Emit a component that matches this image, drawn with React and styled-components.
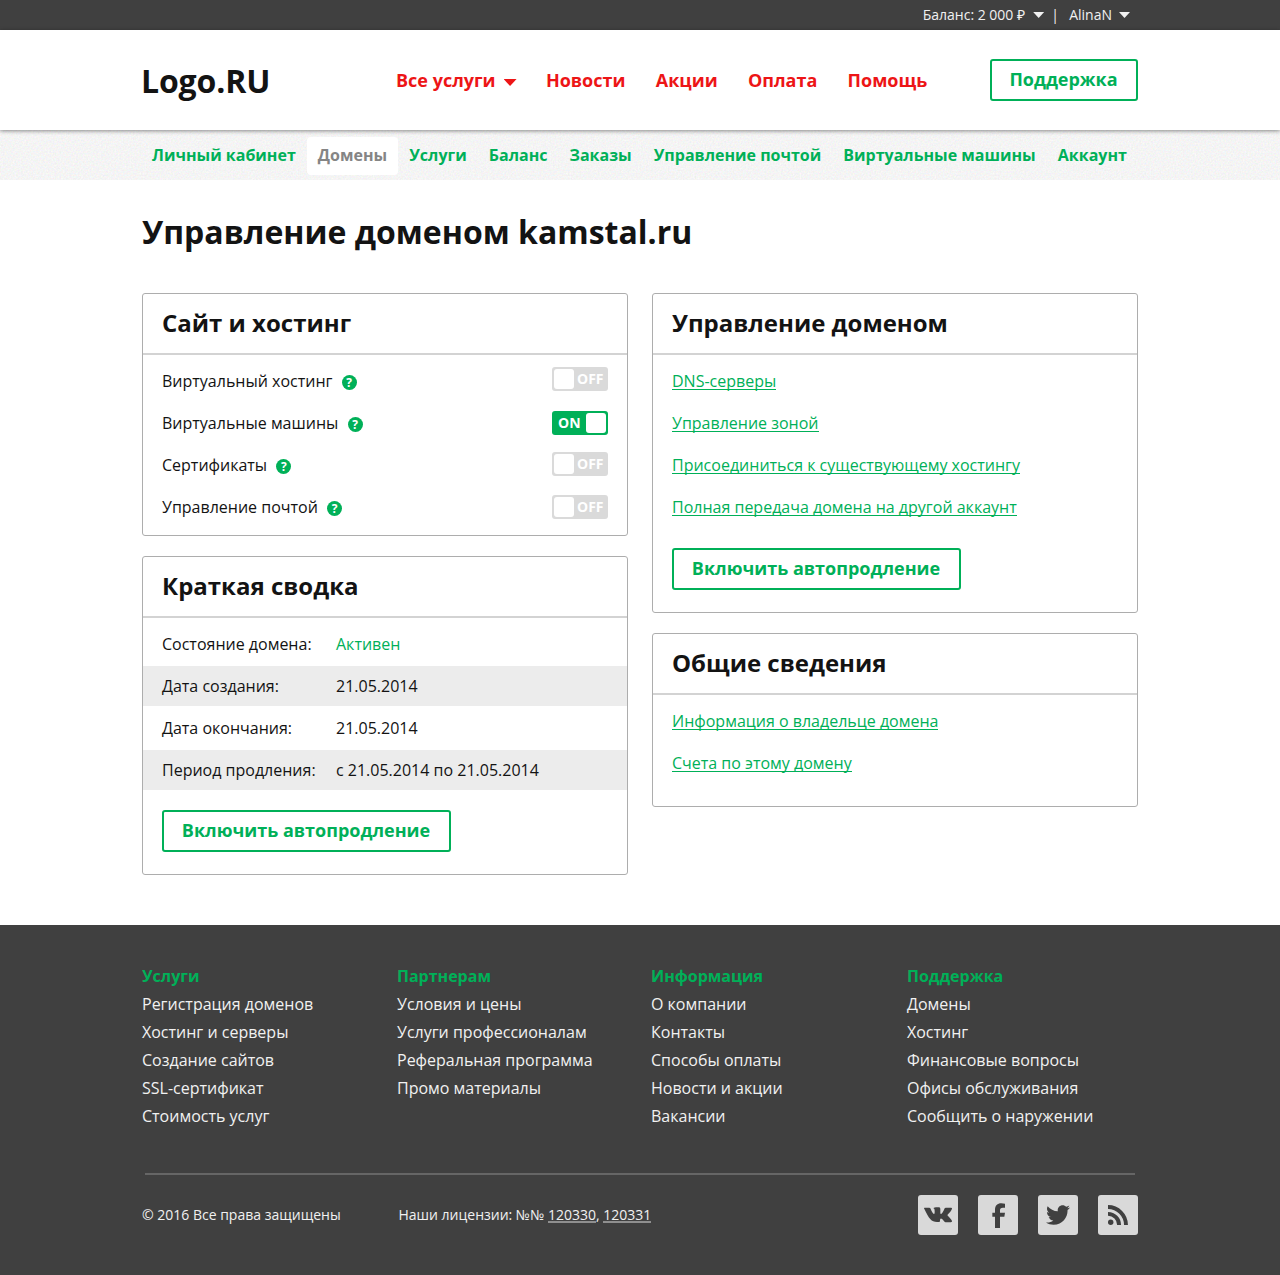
import React, { useState } from "react";
import styled, { createGlobalStyle } from "styled-components";
import { FaTwitter } from "react-icons/fa";

const green = "#00b058";
const red = "#ed1516";
const ink = "#131313";
const dark = "#404040";

const GlobalStyle = createGlobalStyle`
  * { box-sizing: border-box; }
  body {
    margin: 0;
    background: #fff;
    color: ${ink};
    font: 16px/1 "Open Sans", "Noto Sans", sans-serif;
  }
  a { color: inherit; text-decoration: none; }
`;

const Container = styled.div`
  width: 996px;
  margin: 0 auto;
  position: relative;
`;

const TopBar = styled.div`
  height: 30px;
  background: ${dark};
  color: #f1f1f1;
`;

const Account = styled(Container)`
  display: flex;
  justify-content: flex-end;
  align-items: center;
  height: 30px;
  padding-right: 8px;
  font-size: 14px;
  line-height: 30px;
`;

const Caret = styled.span`
  flex: none;
  width: ${(p) => p.$width}px;
  height: ${(p) => Math.ceil(p.$width / 2)}px;
  margin-top: ${(p) => p.$drop || 0}px;
  margin-left: ${(p) => p.$gap}px;
  margin-right: ${(p) => p.$pull || 0}px;
  background: currentColor;
  clip-path: polygon(0 0, 100% 0, 50% 100%);
`;

const Separator = styled.span`
  width: 25px;
  padding-left: 7px;
`;

const Header = styled.header`
  position: relative;
  z-index: 1;
  height: 100px;
  background: #fff;
  box-shadow: 0 1px 4px rgba(0, 0, 0, 0.45);
`;

const HeaderRow = styled(Container)`
  display: flex;
  align-items: center;
  height: 100px;
`;

const Logo = styled.a`
  width: 254px;
  padding-top: 2px;
  margin-left: -1px;
  margin-right: 1px;
  font-size: 32px;
  font-weight: 700;
  line-height: 42px;
  letter-spacing: -0.15px;
`;

const MainNav = styled.nav`
  display: flex;
  gap: 30.3px;
  flex: 1;
  color: ${red};
  font-size: 18px;
  font-weight: 700;
  line-height: 40px;
`;

const MainLink = styled.a`
  display: flex;
  align-items: center;
`;

const Button = styled.button`
  display: block;
  width: ${(p) => p.$width}px;
  height: 42px;
  padding: 0 1px 2px 0;
  border: 2px solid ${green};
  border-radius: 3px;
  background: #fff;
  color: ${green};
  font: 700 18px/36px "Open Sans", "Noto Sans", sans-serif;
  white-space: nowrap;
  cursor: pointer;
`;

const SubBar = styled.div`
  position: relative;
  height: 50px;
  background: #f4f4f4;
`;

const Grain = styled.svg`
  position: absolute;
  inset: 0;
  width: 100%;
  height: 100%;
`;

const Tabs = styled(Container)`
  display: flex;
  padding-top: 7px;
  white-space: nowrap;
`;

const Tab = styled.a`
  height: 38px;
  padding: 0 11.05px;
  border-radius: 4px;
  background: ${(p) => (p.$active ? "#fff" : "transparent")};
  color: ${(p) => (p.$active ? "#858585" : green)};
  font-weight: 700;
  line-height: 37px;

  &:first-child { padding-left: 10px; }
`;

const Main = styled(Container)`
  height: 745px;
`;

const Title = styled.h1`
  margin: 0;
  padding-top: 30px;
  font-size: 32px;
  line-height: 44px;
  height: 113px;
`;

const Columns = styled.div`
  display: grid;
  grid-template-columns: 486px 486px;
  gap: 24px;
  align-items: start;
`;

const Column = styled.div`
  display: grid;
  gap: 20px;
`;

const Card = styled.section`
  border: 1px solid #adadad;
  border-radius: 3px;
  height: ${(p) => p.$height}px;
`;

const CardTitle = styled.h2`
  margin: 0;
  height: 61px;
  padding-left: 19px;
  border-bottom: 2px solid #d3d3d3;
  font-size: 24px;
  line-height: 58px;
`;

const CardBody = styled.div`
  padding: 5px 19px 0;
`;

const ServiceRow = styled.div`
  display: flex;
  align-items: center;
  height: 42px;
`;

const Help = styled.span`
  display: flex;
  justify-content: center;
  align-items: center;
  width: 15px;
  height: 15px;
  margin: 3px auto 0 9.2px;
  border-radius: 50%;
  background: ${green};
  color: #fff;
  font-size: 12px;
  font-weight: 700;
  line-height: 15px;
`;

const Switch = styled.button`
  display: flex;
  flex-direction: ${(p) => (p.$on ? "row-reverse" : "row")};
  align-items: center;
  justify-content: space-between;
  width: 56px;
  height: 24px;
  padding: 0 ${(p) => (p.$on ? "2px 0 6px" : "4.5px 0 2px")};
  margin-bottom: ${(p) => p.$raise * 2}px;
  border: 0;
  border-radius: 3px;
  background: ${(p) => (p.$on ? green : "#dadada")};
  color: #fff;
  font: 700 14px/24px "Open Sans", "Noto Sans", sans-serif;
  cursor: pointer;
`;

const Knob = styled.span`
  width: 20px;
  height: 20px;
  border-radius: 3px;
  background: #fff;
`;

const Summary = styled.div`
  display: grid;
  gap: 2px;
  padding: 6px 0 20px;
`;

const SummaryRow = styled.div`
  display: grid;
  grid-template-columns: 174px 1fr;
  height: 40px;
  padding-left: 19px;
  line-height: 40px;

  &:nth-child(even) { background: #ececec; }
`;

const Value = styled.span`
  color: ${(p) => (p.$good ? green : "inherit")};
`;

const Indent = styled.div`
  padding-left: 19px;
`;

const LinkList = styled.div`
  display: grid;
  justify-items: start;
  grid-auto-rows: 42px;
  align-items: center;
  margin-bottom: 20px;
`;

const TextLink = styled.a`
  padding-top: 2px;
  color: ${green};
  line-height: 15px;
  border-bottom: 1px solid ${green};
`;

const Footer = styled.footer`
  height: 350px;
  padding-top: 37px;
  background: ${dark};
  color: #f1f1f1;
`;

const FooterColumns = styled(Container)`
  display: grid;
  grid-template-columns: 255px 254px 256px 1fr;
  height: 211px;
`;

const FooterColumn = styled.div`
  display: flex;
  flex-direction: column;
  line-height: 28px;
`;

const FooterTitle = styled.strong`
  color: ${green};
`;

const Rule = styled.hr`
  width: 990px;
  height: 2px;
  margin: 0 auto 20px;
  border: 0;
  background: #666;
`;

const Legal = styled(Container)`
  display: flex;
  align-items: center;
  height: 40px;
  font-size: 14px;
  line-height: 20px;
`;

const Copyright = styled.span`
  width: 256.5px;
`;

const License = styled.a`
  display: inline-block;
  line-height: 12px;
  border-bottom: 2px solid #8f8f8f;
`;

const Social = styled.div`
  display: flex;
  gap: 20px;
  margin-left: auto;
`;

const SocialLink = styled.a`
  display: flex;
  align-items: center;
  justify-content: center;
  width: 40px;
  height: 40px;
  border-radius: 3px;
  background: #d9d9d9;
  color: ${dark};
`;

const VkIcon = () => (
  <svg width="40" height="40" viewBox="0 0 120 120" fill="currentColor">
    <path d="M18 40q-1-2 2-2h14q2 0 3 2c4 9 8 17 11 17 2 0 2-3 2-8 0-6-1-8-4-9 2-3 6-3 12-3 8 0 9 1 9 6v9c0 3 0 5 2 5 3 0 7-7 11-17q1-2 3-2h16q4 0 3 3c-2 6-7 12-12 17-2 2-2 3 0 5 4 4 9 9 11 13 2 3 1 6-3 6H85c-4 0-5-2-8-5-4-4-7-7-9-6-2 1-2 4-2 6s-1 4-4 4C42 83 34 74 18 40z" />
  </svg>
);

const FacebookIcon = () => (
  <svg width="40" height="40" viewBox="0 0 120 120" fill="currentColor">
    <path d="M81 26v12h-6c-7 0-9 3-9 8v7h15l-2 12H66v34H51V65h-8V53h8v-9c0-12 7-19 19-19z" />
  </svg>
);

const RssIcon = () => (
  <svg width="20" height="20" viewBox="0 0 20 20" fill="none" stroke="currentColor" strokeWidth="3.9">
    <circle cx="2.7" cy="17.3" r="2.7" fill="currentColor" stroke="none" />
    <path d="M0 8.9A11.1 11.1 0 0 1 11.1 20M0 2A18 18 0 0 1 18 20" />
  </svg>
);

const services = [
  { name: "Виртуальный хостинг", on: false, raise: 2 },
  { name: "Виртуальные машины", on: true, raise: 0 },
  { name: "Сертификаты", on: false, raise: 1 },
  { name: "Управление почтой", on: false, raise: 0 },
];

const summary = [
  ["Состояние домена:", "Активен"],
  ["Дата создания:", "21.05.2014"],
  ["Дата окончания:", "21.05.2014"],
  ["Период продления:", "с 21.05.2014 по 21.05.2014"],
];

const domainLinks = [
  "DNS-серверы",
  "Управление зоной",
  "Присоединиться к существующему хостингу",
  "Полная передача домена на другой аккаунт",
];

const infoLinks = ["Информация о владельце домена", "Счета по этому домену"];

const tabs = [
  "Личный кабинет",
  "Домены",
  "Услуги",
  "Баланс",
  "Заказы",
  "Управление почтой",
  "Виртуальные машины",
  "Аккаунт",
];

const footerColumns = [
  ["Услуги", "Регистрация доменов", "Хостинг и серверы", "Создание сайтов", "SSL-сертификат", "Стоимость услуг"],
  ["Партнерам", "Условия и цены", "Услуги профессионалам", "Реферальная программа", "Промо материалы"],
  ["Информация", "О компании", "Контакты", "Способы оплаты", "Новости и акции", "Вакансии"],
  ["Поддержка", "Домены", "Хостинг", "Финансовые вопросы", "Офисы обслуживания", "Сообщить о наружении"],
];

function Service({ name, on, raise }) {
  const [enabled, setEnabled] = useState(on);
  return (
    <ServiceRow>
      {name}
      <Help>?</Help>
      <Switch $on={enabled} $raise={raise} onClick={() => setEnabled(!enabled)}>
        <Knob />
        {enabled ? "ON" : "OFF"}
      </Switch>
    </ServiceRow>
  );
}

function Links({ items }) {
  return (
    <LinkList>
      {items.map((text) => (
        <TextLink href="#" key={text}>{text}</TextLink>
      ))}
    </LinkList>
  );
}

export default function App() {
  return (
    <>
      <GlobalStyle />
      <TopBar>
        <Account>
          <span>Баланс: 2 000 ₽</span>
          <Caret $width={11} $gap={8} />
          <Separator>|</Separator>
          <span>AlinaN</span>
          <Caret $width={11} $gap={7} />
        </Account>
      </TopBar>
      <Header>
        <HeaderRow>
          <Logo href="#">Logo.RU</Logo>
          <MainNav>
            <MainLink href="#">
              Все услуги
              <Caret $width={13} $gap={8} $drop={5} $pull={-1} />
            </MainLink>
            <MainLink href="#">Новости</MainLink>
            <MainLink href="#">Акции</MainLink>
            <MainLink href="#">Оплата</MainLink>
            <MainLink href="#">Помощь</MainLink>
          </MainNav>
          <Button $width={148}>Поддержка</Button>
        </HeaderRow>
      </Header>
      <SubBar>
        <Grain>
          <filter id="grain" x="0" y="0" width="100%" height="100%" colorInterpolationFilters="sRGB">
            <feTurbulence type="fractalNoise" baseFrequency="0.6" numOctaves="2" />
            <feColorMatrix values="0.12 0 0 0 0.898  0 0.1 0 0 0.908  0 0 0.12 0 0.898  0 0 0 0 1" />
          </filter>
          <rect width="100%" height="100%" filter="url(#grain)" />
        </Grain>
        <Tabs as="nav">
          {tabs.map((text) => (
            <Tab href="#" key={text} $active={text === "Домены"}>{text}</Tab>
          ))}
        </Tabs>
      </SubBar>
      <Main as="main">
        <Title>Управление доменом kamstal.ru</Title>
        <Columns>
          <Column>
            <Card $height={243}>
              <CardTitle>Сайт и хостинг</CardTitle>
              <CardBody>
                {services.map((s) => <Service key={s.name} {...s} />)}
              </CardBody>
            </Card>
            <Card $height={319}>
              <CardTitle>Краткая сводка</CardTitle>
              <Summary>
                {summary.map(([label, value]) => (
                  <SummaryRow key={label}>
                    <span>{label}</span>
                    <Value $good={value === "Активен"}>{value}</Value>
                  </SummaryRow>
                ))}
              </Summary>
              <Indent>
                <Button $width={289}>Включить автопродление</Button>
              </Indent>
            </Card>
          </Column>
          <Column>
            <Card $height={320}>
              <CardTitle>Управление доменом</CardTitle>
              <CardBody>
                <Links items={domainLinks} />
                <Button $width={289}>Включить автопродление</Button>
              </CardBody>
            </Card>
            <Card $height={174}>
              <CardTitle>Общие сведения</CardTitle>
              <CardBody>
                <Links items={infoLinks} />
              </CardBody>
            </Card>
          </Column>
        </Columns>
      </Main>
      <Footer>
        <FooterColumns>
          {footerColumns.map(([title, ...links]) => (
            <FooterColumn key={title}>
              <FooterTitle>{title}</FooterTitle>
              {links.map((text) => <a href="#" key={text}>{text}</a>)}
            </FooterColumn>
          ))}
        </FooterColumns>
        <Rule />
        <Legal>
          <Copyright>© 2016 Все права защищены</Copyright>
          <span>
            Наши лицензии: №№ <License href="#">120330</License>, <License href="#">120331</License>
          </span>
          <Social>
            <SocialLink href="#"><VkIcon /></SocialLink>
            <SocialLink href="#"><FacebookIcon /></SocialLink>
            <SocialLink href="#"><FaTwitter size={24} /></SocialLink>
            <SocialLink href="#"><RssIcon /></SocialLink>
          </Social>
        </Legal>
      </Footer>
    </>
  );
}
